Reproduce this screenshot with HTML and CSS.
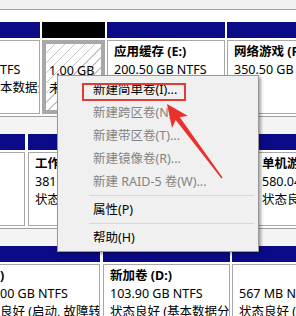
FILE: index.html
```html
<!DOCTYPE html>
<html lang="zh-CN">
<head>
<meta charset="utf-8">
<title>磁盘管理</title>
<link rel="stylesheet" href="styles.css">
</head>
<body>
<div class="screen">
  <div class="topstrip"></div>

  <div class="disk">
    <div class="part w40">
      <div class="bar"></div>
      <div class="box clip-l">
        <div class="ln"></div>
        <div class="ln">TFS</div>
        <div class="ln">本数据分区)</div>
      </div>
    </div>
    <div class="part w63">
      <div class="bar black"></div>
      <div class="box hatch">
        <div class="ln"></div>
        <div class="ln">1.00 GB</div>
        <div class="ln">未分配</div>
      </div>
    </div>
    <div class="part w118">
      <div class="bar"></div>
      <div class="box">
        <div class="ln b">应用缓存 (E:)</div>
        <div class="ln">200.50 GB NTFS</div>
        <div class="ln">状态良好 (基本数据分区)</div>
      </div>
    </div>
    <div class="part grow">
      <div class="bar"></div>
      <div class="box">
        <div class="ln b">网络游戏 (F:)</div>
        <div class="ln">350.50 GB NTFS</div>
        <div class="ln"></div>
      </div>
    </div>
  </div>
  <div class="rowsep"></div>

  <div class="disk">
    <div class="part w25">
      <div class="bar"></div>
      <div class="box clip-l"></div>
    </div>
    <div class="part w228">
      <div class="bar"></div>
      <div class="box">
        <div class="ln b">工作资料 (G:)</div>
        <div class="ln">381.50 GB NTFS</div>
        <div class="ln">状态良好 (基本数据分区)</div>
      </div>
    </div>
    <div class="part grow">
      <div class="bar"></div>
      <div class="box pad-s">
        <div class="ln b">单机游戏 (H:)</div>
        <div class="ln">580.04 GB NTFS</div>
        <div class="ln">状态良好 (基本数据分区)</div>
      </div>
    </div>
  </div>
  <div class="rowsep"></div>

  <div class="disk">
    <div class="part w100">
      <div class="bar"></div>
      <div class="box clip-l">
        <div class="ln b">)</div>
        <div class="ln">00 GB NTFS</div>
        <div class="ln">良好 (启动, 故障转储, 基本数据分区)</div>
      </div>
    </div>
    <div class="part w127">
      <div class="bar"></div>
      <div class="box">
        <div class="ln b">新加卷 (D:)</div>
        <div class="ln">103.90 GB NTFS</div>
        <div class="ln">状态良好 (基本数据分区)</div>
      </div>
    </div>
    <div class="part grow">
      <div class="bar"></div>
      <div class="box">
        <div class="ln"></div>
        <div class="ln">567 MB NTFS</div>
        <div class="ln">状态良好 (恢复分区)</div>
      </div>
    </div>
  </div>

  <div class="menu">
    <div class="item">新建简单卷(I)...</div>
    <div class="item off">新建跨区卷(N)...</div>
    <div class="item off">新建带区卷(T)...</div>
    <div class="item off">新建镜像卷(R)...</div>
    <div class="item off">新建 RAID-5 卷(W)...</div>
    <div class="sep"></div>
    <div class="item">属性(P)</div>
    <div class="sep"></div>
    <div class="item">帮助(H)</div>
    <div class="mark"></div>
  </div>

  <svg class="arrow" width="296" height="316" viewBox="0 0 296 316">
    <polygon points="167,104 188,116 179.7,116.9 222.6,177.6 221.4,178.4 175.7,119.9 172,128" fill="#e8322d"/>
  </svg>
</div>
</body>
</html>
```
FILE: styles.css
```css
html, body {
  margin: 0;
  padding: 0;
}
body {
  width: 296px;
  height: 316px;
  overflow: hidden;
  background: #fff;
  font-family: "Noto Sans", "Noto Sans CJK SC", sans-serif;
  font-size: 12.5px;
  color: #000;
}
.screen {
  position: relative;
  width: 296px;
  height: 316px;
  overflow: hidden;
  background: #fff;
}
.topstrip {
  height: 9px;
  background: #f0f0f0;
  border-bottom: 1px solid #a0a0a0;
  margin-bottom: 12px;
}
.disk {
  display: flex;
  gap: 2px;
  background: #fff;
}
.part {
  flex: none;
  display: flex;
  flex-direction: column;
  gap: 2px;
  min-width: 0;
}
.grow { flex: 1 0 auto; }
.w25 { width: 25px; margin-right: 1px; }
.w40 { width: 40px; }
.w63 { width: 63px; }
.w100 { width: 100px; margin-right: 1px; }
.w118 { width: 118px; }
.w127 { width: 127px; }
.w228 { width: 228px; }
.bar {
  height: 16px;
  background: #0b0b88;
}
.bar.black { background: #000; }
.box {
  height: 74px;
  box-sizing: border-box;
  border: 1px solid #a8a8a8;
  padding: 2px 4px 0 6px;
  overflow: hidden;
  white-space: nowrap;
  background: #fff;
}
.box.clip-l {
  border-left: none;
  padding-left: 0;
}
.box.pad-s { padding-left: 3px; }
.box.hatch {
  border: 4px solid #a8a8a8;
  padding: 0 0 0 3px;
  background: repeating-linear-gradient(135deg, #fff 0 6px, #c4c4c4 6px 7px);
}
.ln {
  height: 18px;
  line-height: 18px;
}
.b { font-weight: bold; }
.rowsep {
  height: 18px;
  box-sizing: border-box;
  border-top: 1px solid #a0a0a0;
  margin-top: 2px;
  background: #f4f4f4;
}
.menu {
  position: absolute;
  left: 57px;
  top: 75px;
  width: 202px;
  box-sizing: border-box;
  padding: 2px;
  background: #f0f0f0;
  border: 1px solid #979797;
  box-shadow: 2px 2px 3px rgba(0, 0, 0, 0.35);
  font-size: 12.5px;
}
.item {
  height: 23px;
  line-height: 23px;
  padding-left: 33px;
  white-space: nowrap;
}
.item.off { color: #838383; }
.sep {
  height: 1px;
  background: #d7d7d7;
  margin: 2px 2px 2px 29px;
}
.mark {
  position: absolute;
  left: 24px;
  top: 7px;
  width: 100px;
  height: 14px;
  border: 2px solid #e23b36;
}
.arrow {
  position: absolute;
  left: 0;
  top: 0;
  pointer-events: none;
}
```
